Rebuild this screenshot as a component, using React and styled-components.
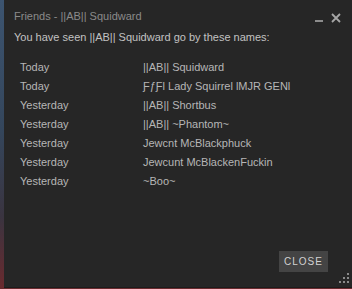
import React from "react";
import styled, { createGlobalStyle } from "styled-components";

const names = [
  { when: "Today", name: "||AB|| Squidward" },
  { when: "Today", name: "ƑƒƑl Lady Squirrel lMJR GENl" },
  { when: "Yesterday", name: "||AB|| Shortbus" },
  { when: "Yesterday", name: "||AB|| ~Phantom~" },
  { when: "Yesterday", name: "Jewcnt McBlackphuck" },
  { when: "Yesterday", name: "Jewcunt McBlackenFuckin" },
  { when: "Yesterday", name: "~Boo~" },
];

const GlobalStyle = createGlobalStyle`
  html, body {
    margin: 0;
    padding: 0;
    width: 352px;
    height: 289px;
    overflow: hidden;
  }
  body {
    background: linear-gradient(180deg, #3c5470 0%, #34465c 45%, #3a3440 75%, #6a2a2e 100%);
    font-family: "Liberation Sans", Arial, sans-serif;
  }
`;

const Dialog = styled.div`
  margin-left: 4px;
  height: 288px;
  background: #262626;
  border-bottom: 1px solid #1c1c1c;
  box-sizing: border-box;
  padding: 9px 0 0 10px;
  display: flex;
  flex-direction: column;
  position: relative;
  font-size: 11px;
`;

const TitleBar = styled.div`
  display: flex;
  align-items: center;
  justify-content: space-between;
  height: 14px;
  line-height: 14px;
  padding-right: 11px;
`;

const Title = styled.div`
  color: #8a8a8a;
`;

const Controls = styled.div`
  display: flex;
  align-items: flex-start;
  gap: 7px;
  margin-top: 3px;
`;

const Intro = styled.div`
  margin-top: 7px;
  line-height: 14px;
  color: #c2c2c2;
`;

const List = styled.div`
  margin-top: 14px;
  padding-left: 6px;
  display: flex;
  flex-direction: column;
`;

const Row = styled.div`
  display: grid;
  grid-template-columns: 123px 1fr;
  line-height: 19px;
  color: #b6b6b6;
`;

const Footer = styled.div`
  margin-top: auto;
  display: flex;
  justify-content: flex-end;
  padding: 0 24px 15px 0;
`;

const CloseButton = styled.button`
  width: 49px;
  height: 21px;
  border: none;
  background: #444444;
  color: #d2d2d2;
  font-family: "Liberation Sans", Arial, sans-serif;
  font-size: 10px;
  letter-spacing: 1px;
  padding: 0;
  cursor: pointer;
`;

const Grip = styled.svg`
  position: absolute;
  right: 2px;
  bottom: 3px;
`;

const Minimize = () => (
  <svg width="9" height="10" viewBox="0 0 9 10">
    <rect x="0" y="7" width="8" height="2" fill="#8c8c8c" />
  </svg>
);

const CloseX = () => (
  <svg width="10" height="10" viewBox="0 0 10 10">
    <path d="M1 1 L9 9 M9 1 L1 9" stroke="#a6a6a6" strokeWidth="1.8" />
  </svg>
);

const App = () => {
  return (
    <>
      <GlobalStyle />
      <Dialog>
        <TitleBar>
          <Title>Friends - ||AB|| Squidward</Title>
          <Controls>
            <Minimize />
            <CloseX />
          </Controls>
        </TitleBar>
        <Intro>You have seen ||AB|| Squidward go by these names:</Intro>
        <List>
          {names.map((n, i) => (
            <Row key={i}>
              <span>{n.when}</span>
              <span>{n.name}</span>
            </Row>
          ))}
        </List>
        <Footer>
          <CloseButton>CLOSE</CloseButton>
        </Footer>
        <Grip width="11" height="11" viewBox="0 0 11 11">
          {[[8, 0], [4, 4], [8, 4], [0, 8], [4, 8], [8, 8]].map(([x, y], i) => (
            <rect key={i} x={x} y={y} width="2" height="2" fill="#8a8a8a" />
          ))}
        </Grip>
      </Dialog>
    </>
  );
};

export default App;
